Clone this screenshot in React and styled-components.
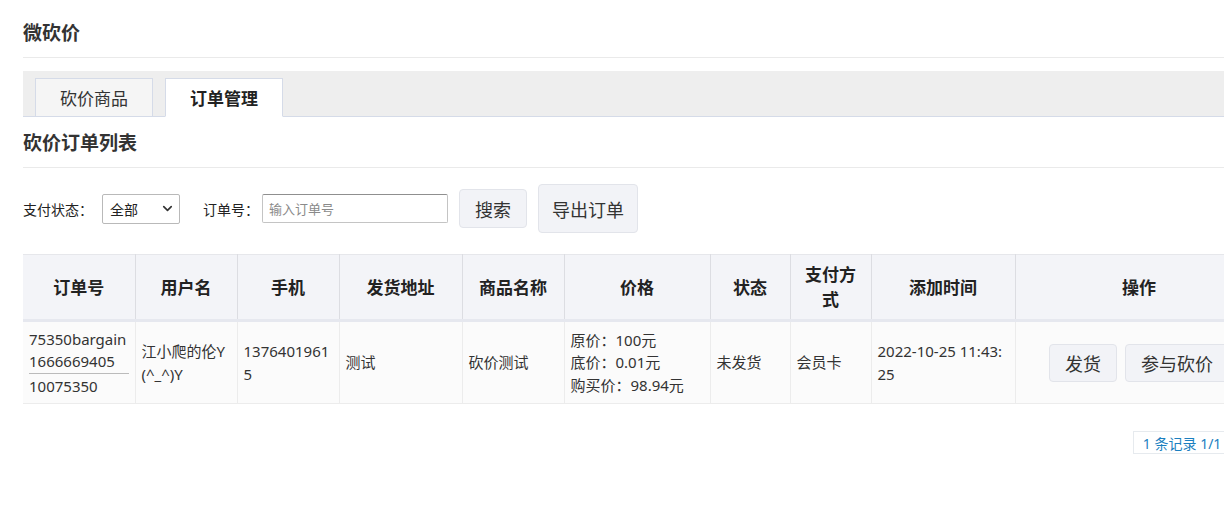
import styled, { createGlobalStyle } from "styled-components";
import { ChevronDown } from "lucide-react";

const GlobalStyle = createGlobalStyle`
  html, body {
    margin: 0;
    padding: 0;
    background: #fff;
    overflow: hidden;
  }
  body {
    font-family: "Noto Sans", "Noto Sans CJK SC", sans-serif;
    color: #333;
  }
`;

const columns = [
  { title: "订单号", width: 112 },
  { title: "用户名", width: 102 },
  { title: "手机", width: 102 },
  { title: "发货地址", width: 123 },
  { title: "商品名称", width: 102 },
  { title: "价格", width: 146 },
  { title: "状态", width: 80 },
  { title: "支付方式", width: 81 },
  { title: "添加时间", width: 144 },
  { title: "操作", width: 248 },
];

const App = () => {
  return (
    <Page>
      <GlobalStyle />
      <PageTitle>微砍价</PageTitle>
      <TabBar>
        <Tab>砍价商品</Tab>
        <Tab active>订单管理</Tab>
      </TabBar>
      <SectionTitle>砍价订单列表</SectionTitle>
      <FilterRow>
        <Label after={9}>支付状态：</Label>
        <Select>
          <span>全部</span>
          <ChevronDown size={15} strokeWidth={2.6} color="#333" />
        </Select>
        <Label before={23} after={3}>订单号：</Label>
        <SearchInput placeholder="输入订单号" />
        <Button>搜索</Button>
        <Button tall>导出订单</Button>
      </FilterRow>
      <Table>
        <colgroup>
          {columns.map((c) => (
            <col key={c.title} style={{ width: c.width }} />
          ))}
        </colgroup>
        <thead>
          <tr>
            {columns.map((c) => (
              <Th key={c.title}>{c.title}</Th>
            ))}
          </tr>
        </thead>
        <tbody>
          <tr>
            <Td>
              <Line>75350bargain</Line>
              <Line>1666669405</Line>
              <Divider />
              <Line>10075350</Line>
            </Td>
            <Td>
              <Line>江小爬的伦Y</Line>
              <Line>(^_^)Y</Line>
            </Td>
            <Td>
              <Line>1376401961</Line>
              <Line>5</Line>
            </Td>
            <Td>测试</Td>
            <Td>砍价测试</Td>
            <Td>
              <Line>原价：100元</Line>
              <Line>底价：0.01元</Line>
              <Line>购买价：98.94元</Line>
            </Td>
            <Td>未发货</Td>
            <Td>会员卡</Td>
            <Td>
              <Line>2022-10-25 11:43:</Line>
              <Line>25</Line>
            </Td>
            <Td center>
              <Actions>
                <ActionButton>发货</ActionButton>
                <ActionButton>参与砍价</ActionButton>
              </Actions>
            </Td>
          </tr>
        </tbody>
      </Table>
      <Footer>
        <Pager>1 条记录 1/1 页</Pager>
      </Footer>
    </Page>
  );
};

export default App;

const Page = styled.div`
  width: 1240px;
  padding: 0 23px;
`;

const PageTitle = styled.h1`
  margin: 0;
  height: 58px;
  box-sizing: border-box;
  padding-top: 20px;
  font-size: 19px;
  line-height: 26px;
  font-weight: 700;
  color: #333;
  border-bottom: 1px solid #eaeaea;
`;

const TabBar = styled.div`
  display: flex;
  align-items: flex-end;
  gap: 12px;
  margin-top: 13px;
  height: 45px;
  padding-left: 12px;
  background: #eeeeee;
  border-bottom: 1px solid #d5dbe8;
`;

const Tab = styled.div`
  width: 118px;
  height: 39px;
  box-sizing: border-box;
  margin-bottom: -1px;
  display: flex;
  align-items: center;
  justify-content: center;
  font-size: 17px;
  font-weight: ${(p) => (p.active ? 700 : 400)};
  color: ${(p) => (p.active ? "#222" : "#333")};
  background: ${(p) => (p.active ? "#fff" : "#f5f5f5")};
  border: 1px solid #d5dbe8;
  border-bottom-color: ${(p) => (p.active ? "#fff" : "#d5dbe8")};
`;

const SectionTitle = styled.h2`
  margin: 0;
  height: 51px;
  box-sizing: border-box;
  padding-top: 12px;
  font-size: 19px;
  line-height: 28px;
  font-weight: 700;
  color: #333;
  border-bottom: 1px solid #eaeaea;
`;

const FilterRow = styled.div`
  display: flex;
  align-items: center;
  height: 49px;
  margin-top: 16px;
`;

const Label = styled.span`
  font-size: 14px;
  color: #222;
  margin-left: ${(p) => p.before || 0}px;
  margin-right: ${(p) => p.after || 0}px;
`;

const Select = styled.div`
  width: 78px;
  height: 30px;
  box-sizing: border-box;
  display: flex;
  align-items: center;
  justify-content: space-between;
  padding: 0 4px 0 7px;
  border: 1px solid #b9b9b9;
  border-radius: 2px;
  font-size: 14px;
  color: #222;
`;

const SearchInput = styled.input`
  width: 186px;
  height: 29px;
  box-sizing: border-box;
  padding: 0 6px;
  border: 1px solid #c4c4c4;
  border-top-color: #8f8f8f;
  border-radius: 2px;
  font-family: inherit;
  font-size: 13px;
  outline: none;
  &::placeholder {
    color: #8a8a8a;
  }
`;

const Button = styled.button`
  margin-left: 11px;
  height: ${(p) => (p.tall ? "49px" : "39px")};
  padding: 0 ${(p) => (p.tall ? "13px" : "15px")};
  box-sizing: border-box;
  background: #f2f3f7;
  border: 1px solid #e2e4ea;
  border-radius: 4px;
  font-family: inherit;
  font-size: 18px;
  color: #333;
`;

const Table = styled.table`
  width: 1240px;
  margin-top: 21px;
  border-collapse: collapse;
  table-layout: fixed;
  font-size: 15px;
  color: #333;
`;

const Th = styled.th`
  height: 64px;
  padding: 0 7px;
  background: #f3f4f8;
  border: 1px solid #dcdde2;
  border-top-color: #e6e7eb;
  border-bottom: 3px solid #e6e8ef;
  font-size: 17px;
  line-height: 25px;
  font-weight: 700;
  color: #222;
  text-align: center;
  &:first-child {
    border-left: none;
  }
`;

const Td = styled.td`
  height: 81px;
  padding: 0 6px;
  background: #fbfbfb;
  border: 1px solid #ececec;
  line-height: 22.5px;
  text-align: ${(p) => (p.center ? "center" : "left")};
  vertical-align: middle;
  word-break: break-all;
  &:first-child {
    border-left: none;
  }
`;

const Line = styled.div`
  white-space: nowrap;
`;

const Divider = styled.div`
  height: 1px;
  background: #bbb;
  margin: 0 0 1px;
`;

const Actions = styled.div`
  display: flex;
  justify-content: center;
  gap: 8px;
`;

const ActionButton = styled.button`
  height: 38px;
  padding: 0 15px;
  background: #f2f3f7;
  border: 1px solid #e2e4ea;
  border-radius: 4px;
  font-family: inherit;
  font-size: 18px;
  color: #333;
`;

const Footer = styled.div`
  display: flex;
  justify-content: flex-end;
  margin-top: 27px;
  padding-right: 14px;
`;

const Pager = styled.div`
  height: 23px;
  box-sizing: border-box;
  padding: 0 9px;
  display: flex;
  align-items: center;
  border: 1px solid #e6eaee;
  font-size: 14px;
  color: #1b7fc0;
`;
